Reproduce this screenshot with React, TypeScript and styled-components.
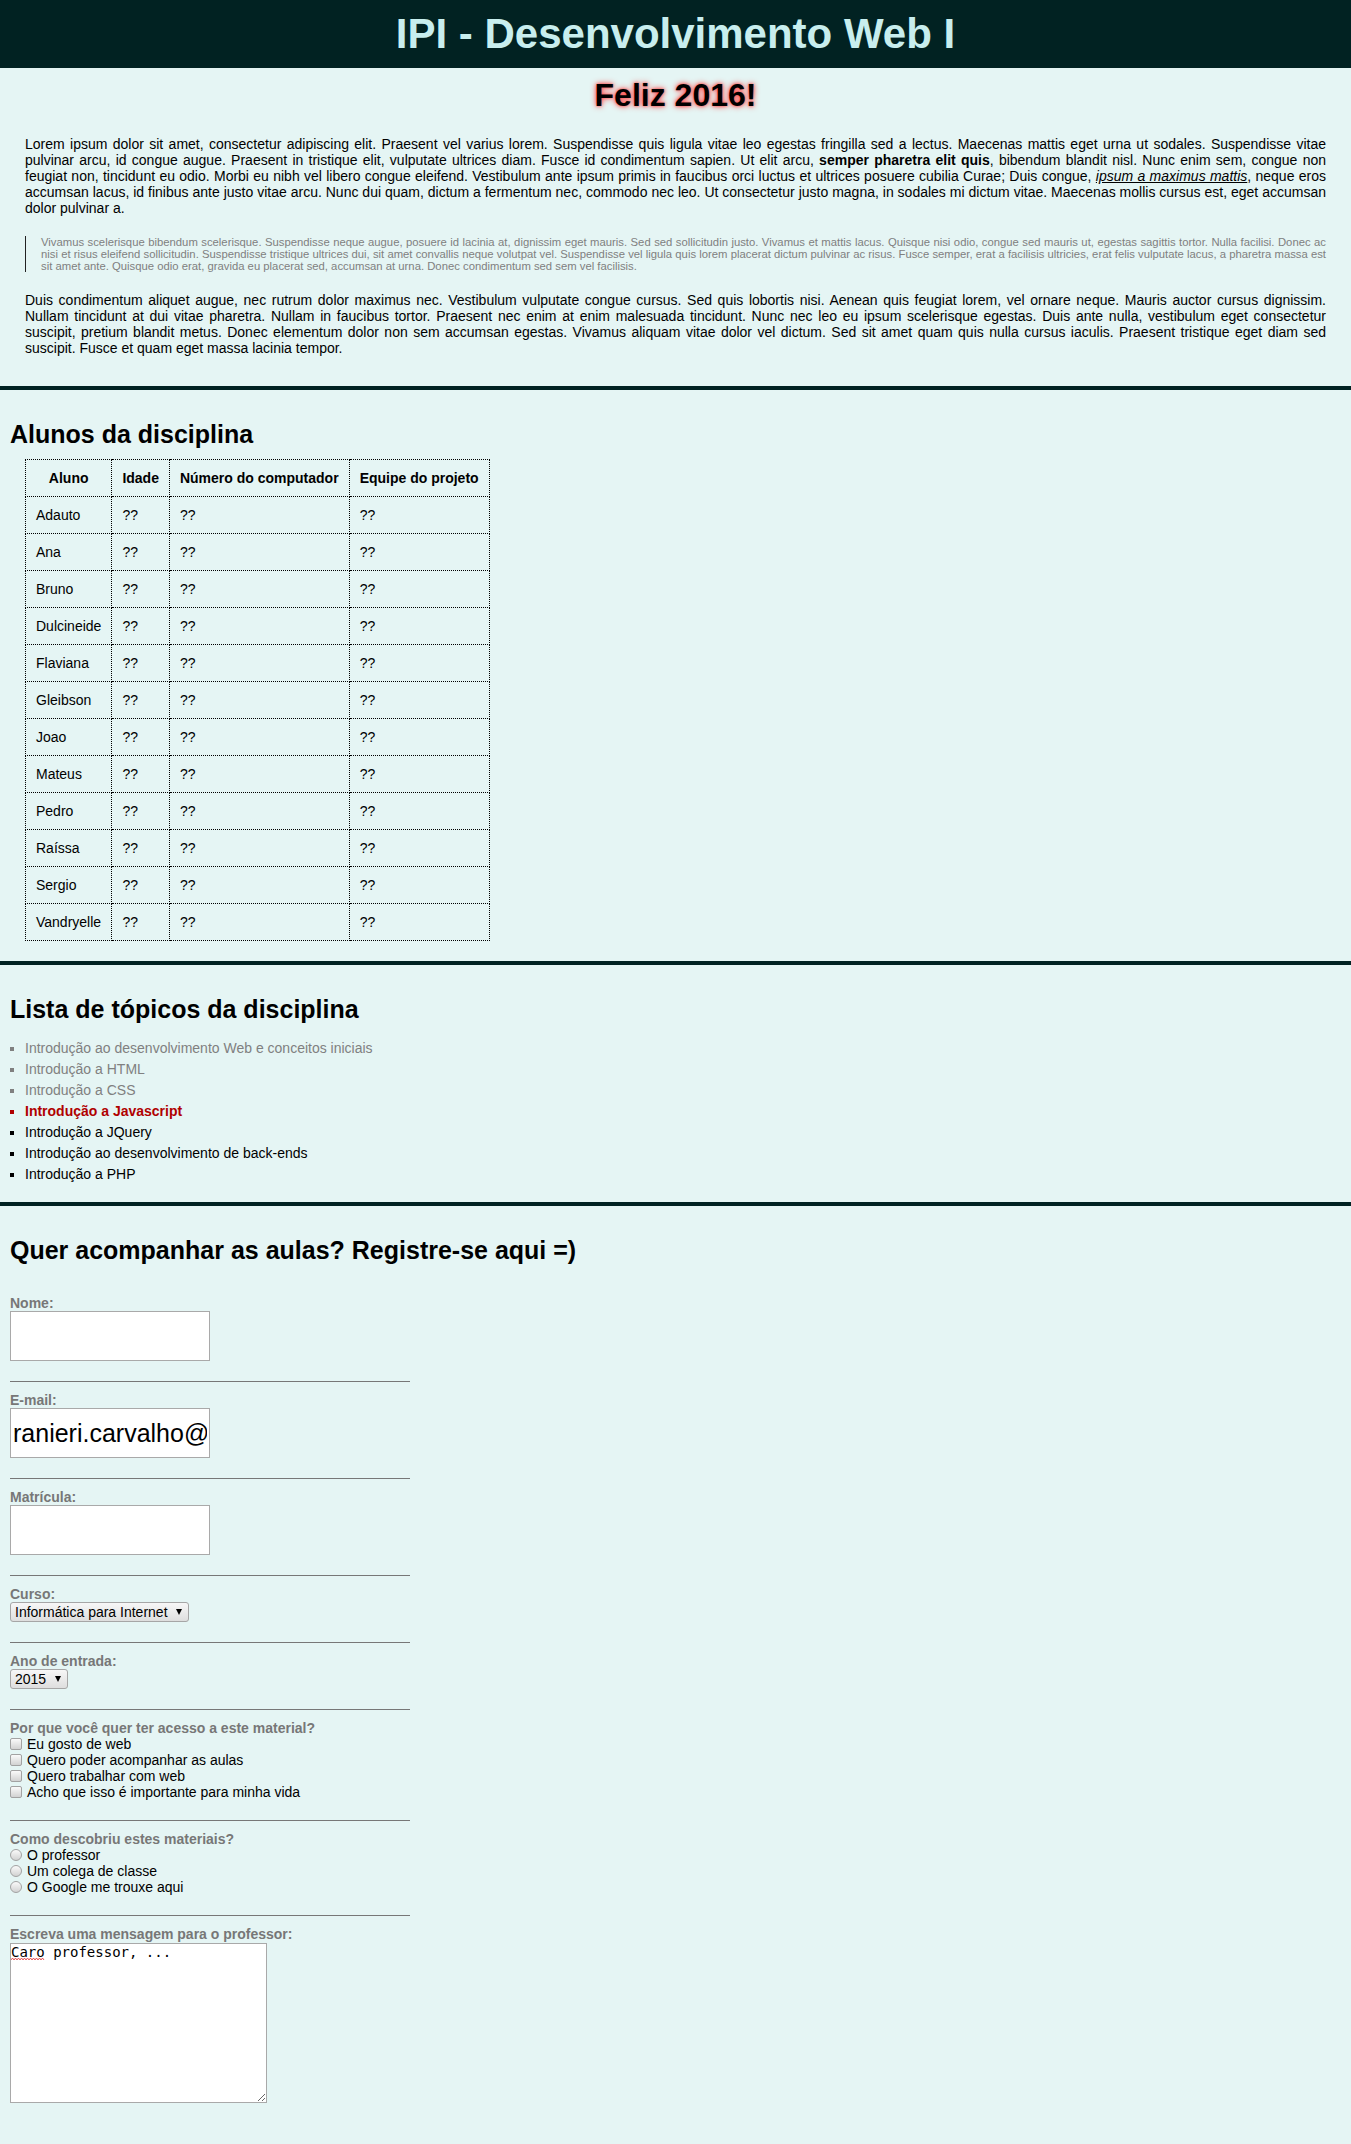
import React from "react";
import styled, { createGlobalStyle } from "styled-components";

const GlobalStyle = createGlobalStyle`
  html, body {
    margin: 0;
    padding: 0;
    background: #e5f5f4;
  }
  body {
    font-family: "Liberation Sans", Arial, sans-serif;
    font-size: 14px;
    color: #000;
  }
`;

const Header = styled.header`
  background: #012222;
  height: 68px;
  display: flex;
  align-items: center;
  justify-content: center;
`;

const Title = styled.h1`
  margin: 0;
  font-size: 42px;
  font-weight: bold;
  line-height: normal;
  color: #c8eeee;
`;

const Intro = styled.section`
  padding: 9px 25px 30px;
`;

const Greeting = styled.h1`
  margin: 0 0 22px;
  text-align: center;
  font-size: 32px;
  line-height: normal;
  text-shadow: 0 0 6px #ff3a3a, 0 0 3px #ff5a5a;
`;

const Para = styled.p`
  margin: 0;
  text-align: justify;
  font-size: 14px;
  line-height: normal;
`;

const Underlined = styled.em`
  text-decoration: underline;
`;

const Quote = styled.blockquote`
  margin: 20px 0 20px;
  padding-left: 15px;
  border-left: 1px solid #222;
  font-size: 11.3px;
  line-height: 12px;
  color: #808080;
  text-align: justify;
`;

const Section = styled.section`
  border-top: 4px solid #012222;
  padding: 10px;
`;

const SectionTitle = styled.h2`
  margin: 20px 0 10px;
  font-size: 25px;
  line-height: normal;
`;

const Roster = styled.table`
  border-collapse: collapse;
  margin: 0 0 10px 15px;
  font-size: 14px;
`;

const HeadCell = styled.th`
  border: 1px dotted #000;
  padding: 10px;
  font-weight: bold;
  text-align: center;
  line-height: normal;
`;

const Cell = styled.td`
  border: 1px dotted #000;
  padding: 10px;
  text-align: left;
  line-height: normal;
`;

type Tone = "done" | "current" | "todo";

const TopicList = styled.ul`
  margin: 14px 0 7px;
  padding-left: 15px;
  list-style: square;
  font-size: 14px;
  line-height: 21px;
`;

const Topic = styled.li<{ $tone: Tone }>`
  color: ${(p) =>
    p.$tone === "done" ? "#808080" : p.$tone === "current" ? "#b00000" : "#000"};
  font-weight: ${(p) => (p.$tone === "current" ? "bold" : "normal")};
`;

const Form = styled.form`
  margin-top: 20px;
  display: flex;
  flex-direction: column;
  align-items: flex-start;
`;

const FieldGroup = styled.div<{ $last?: boolean }>`
  width: 400px;
  box-sizing: border-box;
  padding: 10px 0 20px;
  border-bottom: ${(p) => (p.$last ? "none" : "1px solid #777")};
  display: flex;
  flex-direction: column;
  align-items: flex-start;
`;

const FieldLabel = styled.label`
  font-weight: bold;
  color: #777;
  font-size: 14px;
  line-height: 16px;
`;

const TextInput = styled.input`
  box-sizing: border-box;
  width: 200px;
  height: 50px;
  margin: 0;
  border: 1px solid #a9a9a9;
  background: #fff;
  padding: 1px 2px;
  font-family: "Liberation Sans", Arial, sans-serif;
  font-size: 25px;
  color: #000;
  outline: none;
`;

const SelectWrap = styled.span`
  position: relative;
  display: inline-block;
  &::after {
    content: "";
    position: absolute;
    right: 7px;
    top: 50%;
    margin-top: -3px;
    border-left: 3.5px solid transparent;
    border-right: 3.5px solid transparent;
    border-top: 6px solid #000;
    pointer-events: none;
  }
`;

const Dropdown = styled.select`
  appearance: none;
  -webkit-appearance: none;
  display: block;
  box-sizing: border-box;
  height: 20px;
  margin: 0;
  padding: 0 20px 0 4px;
  border: 1px solid #a6a6a6;
  border-radius: 3px;
  background: linear-gradient(#f7f7f7, #dedede);
  font-family: "Liberation Sans", Arial, sans-serif;
  font-size: 14px;
  line-height: 18px;
  color: #000;
`;

const ChoiceList = styled.div`
  display: flex;
  flex-direction: column;
`;

const ChoiceRow = styled.label`
  display: flex;
  align-items: center;
  height: 16px;
  font-size: 14px;
  color: #000;
`;

const Tick = styled.input<{ $round?: boolean }>`
  appearance: none;
  -webkit-appearance: none;
  box-sizing: border-box;
  width: 12px;
  height: 12px;
  margin: 0 5px 0 0;
  border: 1px solid #a2a2a2;
  border-radius: ${(p) => (p.$round ? "50%" : "2px")};
  background: linear-gradient(#fafafa, #d2d2d2);
`;

const MessageWrap = styled.div`
  position: relative;
  margin-top: 1px;
`;

const MessageBox = styled.textarea`
  display: block;
  box-sizing: border-box;
  width: 257px;
  height: 160px;
  margin: 0;
  padding: 0;
  border: 1px solid #a9a9a9;
  background: #fff;
  font-family: "DejaVu Sans Mono", monospace;
  font-size: 14px;
  color: #000;
  outline: none;
`;

const Squiggle = styled.svg`
  position: absolute;
  left: 1px;
  top: 14px;
  pointer-events: none;
`;

const students = [
  "Adauto",
  "Ana",
  "Bruno",
  "Dulcineide",
  "Flaviana",
  "Gleibson",
  "Joao",
  "Mateus",
  "Pedro",
  "Raíssa",
  "Sergio",
  "Vandryelle",
];

const topics: { text: string; tone: Tone }[] = [
  { text: "Introdução ao desenvolvimento Web e conceitos iniciais", tone: "done" },
  { text: "Introdução a HTML", tone: "done" },
  { text: "Introdução a CSS", tone: "done" },
  { text: "Introdução a Javascript", tone: "current" },
  { text: "Introdução a JQuery", tone: "todo" },
  { text: "Introdução ao desenvolvimento de back-ends", tone: "todo" },
  { text: "Introdução a PHP", tone: "todo" },
];

const reasons = [
  "Eu gosto de web",
  "Quero poder acompanhar as aulas",
  "Quero trabalhar com web",
  "Acho que isso é importante para minha vida",
];

const sources = ["O professor", "Um colega de classe", "O Google me trouxe aqui"];

export default function App() {
  return (
    <>
      <GlobalStyle />
      <Header>
        <Title>IPI - Desenvolvimento Web I</Title>
      </Header>

      <Intro>
        <Greeting>Feliz 2016!</Greeting>
        <Para>
          Lorem ipsum dolor sit amet, consectetur adipiscing elit. Praesent vel varius lorem.
          Suspendisse quis ligula vitae leo egestas fringilla sed a lectus. Maecenas mattis eget urna
          ut sodales. Suspendisse vitae pulvinar arcu, id congue augue. Praesent in tristique elit,
          vulputate ultrices diam. Fusce id condimentum sapien. Ut elit arcu,{" "}
          <strong>semper pharetra elit quis</strong>, bibendum blandit nisl. Nunc enim sem, congue non
          feugiat non, tincidunt eu odio. Morbi eu nibh vel libero congue eleifend. Vestibulum ante
          ipsum primis in faucibus orci luctus et ultrices posuere cubilia Curae; Duis congue,{" "}
          <Underlined>ipsum a maximus mattis</Underlined>, neque eros accumsan lacus, id finibus ante
          justo vitae arcu. Nunc dui quam, dictum a fermentum nec, commodo nec leo. Ut consectetur
          justo magna, in sodales mi dictum vitae. Maecenas mollis cursus est, eget accumsan dolor
          pulvinar a.
        </Para>
        <Quote>
          Vivamus scelerisque bibendum scelerisque. Suspendisse neque augue, posuere id lacinia at,
          dignissim eget mauris. Sed sed sollicitudin justo. Vivamus et mattis lacus. Quisque nisi
          odio, congue sed mauris ut, egestas sagittis tortor. Nulla facilisi. Donec ac nisi et risus
          eleifend sollicitudin. Suspendisse tristique ultrices dui, sit amet convallis neque volutpat
          vel. Suspendisse vel ligula quis lorem placerat dictum pulvinar ac risus. Fusce semper, erat
          a facilisis ultricies, erat felis vulputate lacus, a pharetra massa est sit amet ante.
          Quisque odio erat, gravida eu placerat sed, accumsan at urna. Donec condimentum sed sem vel
          facilisis.
        </Quote>
        <Para>
          Duis condimentum aliquet augue, nec rutrum dolor maximus nec. Vestibulum vulputate congue
          cursus. Sed quis lobortis nisi. Aenean quis feugiat lorem, vel ornare neque. Mauris auctor
          cursus dignissim. Nullam tincidunt at dui vitae pharetra. Nullam in faucibus tortor.
          Praesent nec enim at enim malesuada tincidunt. Nunc nec leo eu ipsum scelerisque egestas.
          Duis ante nulla, vestibulum eget consectetur suscipit, pretium blandit metus. Donec
          elementum dolor non sem accumsan egestas. Vivamus aliquam vitae dolor vel dictum. Sed sit
          amet quam quis nulla cursus iaculis. Praesent tristique eget diam sed suscipit. Fusce et
          quam eget massa lacinia tempor.
        </Para>
      </Intro>

      <Section>
        <SectionTitle>Alunos da disciplina</SectionTitle>
        <Roster>
          <thead>
            <tr>
              <HeadCell>Aluno</HeadCell>
              <HeadCell>Idade</HeadCell>
              <HeadCell>Número do computador</HeadCell>
              <HeadCell>Equipe do projeto</HeadCell>
            </tr>
          </thead>
          <tbody>
            {students.map((name) => (
              <tr key={name}>
                <Cell>{name}</Cell>
                <Cell>??</Cell>
                <Cell>??</Cell>
                <Cell>??</Cell>
              </tr>
            ))}
          </tbody>
        </Roster>
      </Section>

      <Section>
        <SectionTitle>Lista de tópicos da disciplina</SectionTitle>
        <TopicList>
          {topics.map((t) => (
            <Topic key={t.text} $tone={t.tone}>
              {t.text}
            </Topic>
          ))}
        </TopicList>
      </Section>

      <Section>
        <SectionTitle>Quer acompanhar as aulas? Registre-se aqui =)</SectionTitle>
        <Form onSubmit={(e) => e.preventDefault()}>
          <FieldGroup>
            <FieldLabel htmlFor="nome">Nome:</FieldLabel>
            <TextInput id="nome" type="text" />
          </FieldGroup>
          <FieldGroup>
            <FieldLabel htmlFor="email">E-mail:</FieldLabel>
            <TextInput id="email" type="text" defaultValue="ranieri.carvalho@gmail.com" />
          </FieldGroup>
          <FieldGroup>
            <FieldLabel htmlFor="matricula">Matrícula:</FieldLabel>
            <TextInput id="matricula" type="text" />
          </FieldGroup>
          <FieldGroup>
            <FieldLabel htmlFor="curso">Curso:</FieldLabel>
            <SelectWrap>
              <Dropdown id="curso" defaultValue="ipi">
                <option value="ipi">Informática para Internet</option>
              </Dropdown>
            </SelectWrap>
          </FieldGroup>
          <FieldGroup>
            <FieldLabel htmlFor="ano">Ano de entrada:</FieldLabel>
            <SelectWrap>
              <Dropdown id="ano" defaultValue="2015">
                <option value="2014">2014</option>
                <option value="2015">2015</option>
                <option value="2016">2016</option>
              </Dropdown>
            </SelectWrap>
          </FieldGroup>
          <FieldGroup>
            <FieldLabel as="span">Por que você quer ter acesso a este material?</FieldLabel>
            <ChoiceList>
              {reasons.map((r) => (
                <ChoiceRow key={r}>
                  <Tick type="checkbox" name="motivo" />
                  {r}
                </ChoiceRow>
              ))}
            </ChoiceList>
          </FieldGroup>
          <FieldGroup>
            <FieldLabel as="span">Como descobriu estes materiais?</FieldLabel>
            <ChoiceList>
              {sources.map((s) => (
                <ChoiceRow key={s}>
                  <Tick type="radio" name="origem" $round />
                  {s}
                </ChoiceRow>
              ))}
            </ChoiceList>
          </FieldGroup>
          <FieldGroup $last>
            <FieldLabel htmlFor="mensagem">Escreva uma mensagem para o professor:</FieldLabel>
            <MessageWrap>
              <MessageBox id="mensagem" defaultValue="Caro professor, ..." spellCheck={false} />
              <Squiggle width="34" height="4" viewBox="0 0 34 4">
                <polyline
                  points="0,3 1.5,1 3,3 4.5,1 6,3 7.5,1 9,3 10.5,1 12,3 13.5,1 15,3 16.5,1 18,3 19.5,1 21,3 22.5,1 24,3 25.5,1 27,3 28.5,1 30,3 31.5,1 33,3"
                  fill="none"
                  stroke="#e03030"
                  strokeWidth="0.8"
                />
              </Squiggle>
            </MessageWrap>
          </FieldGroup>
        </Form>
      </Section>
    </>
  );
}
